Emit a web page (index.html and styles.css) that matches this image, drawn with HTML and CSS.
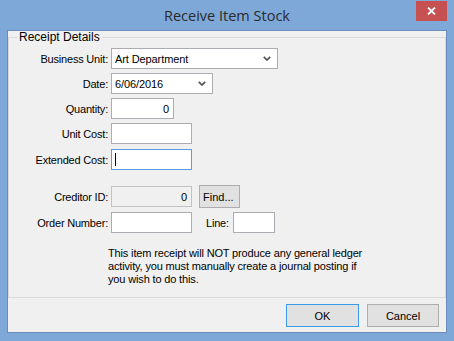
FILE: index.html
```html
<!DOCTYPE html>
<html>
<head>
  <title>Receive Item Stock</title>
  <link rel="stylesheet" href="styles.css">
</head>
<body>
  <div class="window">
    <div class="titlebar">
      <span class="title">Receive Item Stock</span>
      <div class="close">
        <svg width="9" height="8" viewBox="0 0 9 8">
          <path d="M1 0.5 L8 7.5 M8 0.5 L1 7.5" stroke="#fff" stroke-width="1.8"/>
        </svg>
      </div>
    </div>

    <div class="client">
      <fieldset class="group">
        <legend>Receipt Details</legend>

        <div class="row">
          <label>Business Unit:</label>
          <div class="field combo w-unit">
            <span>Art Department</span>
            <svg class="chev" width="8" height="5" viewBox="0 0 8 5"><path d="M0.8 0.8 L4 4 L7.2 0.8" fill="none" stroke="#555" stroke-width="1.7"/></svg>
          </div>
        </div>

        <div class="row">
          <label>Date:</label>
          <div class="field combo w-date">
            <span>6/06/2016</span>
            <svg class="chev" width="8" height="5" viewBox="0 0 8 5"><path d="M0.8 0.8 L4 4 L7.2 0.8" fill="none" stroke="#555" stroke-width="1.7"/></svg>
          </div>
        </div>

        <div class="row">
          <label>Quantity:</label>
          <div class="field num w-qty">0</div>
        </div>

        <div class="row">
          <label>Unit Cost:</label>
          <div class="field w-cost"></div>
        </div>

        <div class="row row-ext">
          <label>Extended Cost:</label>
          <div class="field focused w-cost"><span class="caret"></span></div>
        </div>

        <div class="row row-cred">
          <label>Creditor ID:</label>
          <div class="field num readonly w-cost">0</div>
          <button class="btn find">Find...</button>
        </div>

        <div class="row">
          <label>Order Number:</label>
          <div class="field w-cost"></div>
          <span class="line-label">Line:</span>
          <div class="field w-line"></div>
        </div>

        <p class="note">
          This item receipt will NOT produce any general ledger<br>
          activity, you must manually create a journal posting if<br>
          you wish to do this.
        </p>
      </fieldset>

      <div class="buttons">
        <button class="btn default">OK</button>
        <button class="btn">Cancel</button>
      </div>
    </div>
  </div>
</body>
</html>
```

FILE: styles.css
```css
/* Windows 8 style dialog */
body {
  margin: 0;
  padding: 0;
  font-family: 'Liberation Sans', Arial, sans-serif;
  font-size: 11px;
  color: #000;
}

.window {
  width: 454px;
  height: 341px;
  background-color: #7ea8d8;
  box-sizing: border-box;
  display: flex;
  flex-direction: column;
}

.titlebar {
  position: relative;
  height: 30px;
  display: flex;
  align-items: center;
  justify-content: center;
}

.title {
  font-family: 'Open Sans', 'Noto Sans', sans-serif;
  font-size: 14.5px;
  color: #2b2b2b;
}

.close {
  position: absolute;
  top: 1px;
  right: 7px;
  width: 31px;
  height: 20px;
  background-color: #c75050;
  display: flex;
  align-items: center;
  justify-content: center;
}

.client {
  margin: 0 7px;
  height: 303px;
  box-sizing: border-box;
  border: 1px solid #6a8cb8;
  background-color: #f0f0f0;
  display: flex;
  flex-direction: column;
}

.group {
  margin: 0;
  padding: 0;
  height: 267px;
  box-sizing: border-box;
  border: 1px solid #d9d9d9;
  min-width: 0;
}

.group legend {
  margin-left: 8px;
  padding: 0 2px;
  line-height: 13px;
  font-size: 12px;
}

.row {
  display: flex;
  align-items: center;
  height: 21px;
  margin-top: 4px;
}

.row-ext {
  margin-top: 5px;
}

.row-cred {
  margin-top: 15px;
  height: 23px;
}

.row label {
  width: 99px;
  margin-right: 3px;
  text-align: right;
  letter-spacing: -0.2px;
}

.field {
  height: 21px;
  box-sizing: border-box;
  border: 1px solid #abadb3;
  background-color: #fff;
  padding: 0 3px;
  display: flex;
  align-items: center;
  letter-spacing: -0.1px;
}

.combo {
  justify-content: space-between;
  padding-right: 6px;
}

.num {
  justify-content: flex-end;
  padding-right: 4px;
}

.readonly {
  background-color: #f0f0f0;
  border-color: #c2c2c2;
}

.focused {
  border-color: #569de5;
}

.caret {
  display: block;
  width: 1px;
  height: 13px;
  background-color: #000;
}

.w-unit { width: 167px; }
.w-date { width: 102px; }
.w-qty { width: 63px; }
.w-cost { width: 81px; }
.w-line { width: 42px; }

.line-label {
  margin-left: 14px;
  margin-right: 4px;
  letter-spacing: -0.2px;
}

.btn {
  font-family: 'Liberation Sans', Arial, sans-serif;
  font-size: 11px;
  color: #000;
  background-color: #e1e1e1;
  border: 1px solid #adadad;
  padding: 0;
  height: 23px;
  box-sizing: border-box;
}

.find {
  width: 41px;
  margin-left: 7px;
  text-align: left;
  padding-left: 3px;
}

.note {
  margin: 14px 0 0 99px;
  line-height: 13px;
  letter-spacing: -0.15px;
}

.buttons {
  display: flex;
  justify-content: flex-end;
  gap: 8px;
  padding: 6px 7px 0 0;
}

.buttons .btn {
  width: 72px;
}

.buttons .default {
  width: 73px;
  border-color: #3c9ae6;
}
```
